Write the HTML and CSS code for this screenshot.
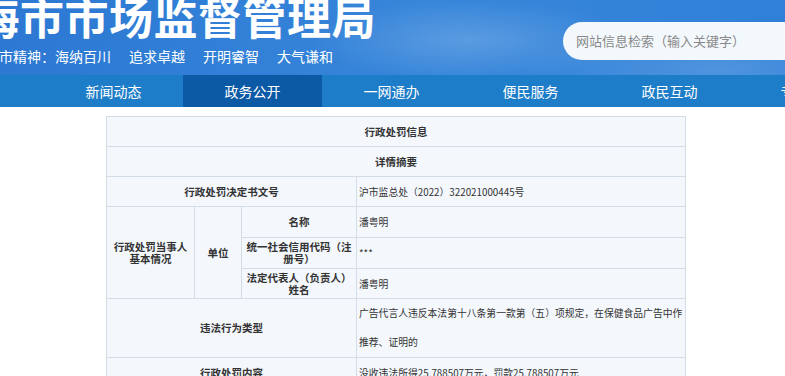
FILE: index.html
```html
<!DOCTYPE html>
<html lang="zh-CN">
<head>
    <meta charset="UTF-8">
    <meta name="viewport" content="width=device-width, initial-scale=1.0">
    <title>上海市市场监督管理局 - 行政处罚信息</title>
    <link rel="stylesheet" href="styles.css">
</head>
<body>
    <div class="header">
        <div class="brand">
            <div class="site-title">上海市市场监督管理局</div>
            <div class="motto">
                <span>上海市精神：海纳百川</span>
                <span>追求卓越</span>
                <span>开明睿智</span>
                <span>大气谦和</span>
            </div>
        </div>
        <div class="search-box">网站信息检索（输入关键字）</div>
    </div>

    <div class="nav">
        <div class="nav-inner">
            <a class="nav-item">新闻动态</a>
            <a class="nav-item active">政务公开</a>
            <a class="nav-item">一网通办</a>
            <a class="nav-item">便民服务</a>
            <a class="nav-item">政民互动</a>
            <a class="nav-item">专题专栏</a>
        </div>
    </div>

    <div class="content">
        <table class="info-table">
            <colgroup>
                <col class="c1">
                <col class="c2">
                <col class="c3">
                <col class="c4">
            </colgroup>
            <tr class="row-30">
                <td colspan="4" class="label">行政处罚信息</td>
            </tr>
            <tr class="row-30">
                <td colspan="4" class="label">详情摘要</td>
            </tr>
            <tr class="row-30">
                <td colspan="3" class="label">行政处罚决定书文号</td>
                <td class="value">沪市监总处（2022）322021000445号</td>
            </tr>
            <tr class="row-31">
                <td rowspan="3" class="label">行政处罚当事人<br>基本情况</td>
                <td rowspan="3" class="label">单位</td>
                <td class="label">名称</td>
                <td class="value">潘粤明</td>
            </tr>
            <tr class="row-31">
                <td class="label">统一社会信用代码（注册号）</td>
                <td class="value">***</td>
            </tr>
            <tr class="row-30">
                <td class="label">法定代表人（负责人）姓名</td>
                <td class="value">潘粤明</td>
            </tr>
            <tr class="row-57">
                <td colspan="3" class="label">违法行为类型</td>
                <td class="value long">广告代言人违反本法第十八条第一款第（五）项规定，在保健食品广告中作推荐、证明的</td>
            </tr>
            <tr class="row-30">
                <td colspan="3" class="label">行政处罚内容</td>
                <td class="value">没收违法所得25.788507万元，罚款25.788507万元</td>
            </tr>
        </table>
    </div>
</body>
</html>
```

FILE: styles.css
```css
body {
    margin: 0;
    font-family: "Noto Sans CJK SC", "Noto Sans", sans-serif;
    color: #333;
    background: #fff;
    overflow: hidden;
}

/* header */
.header {
    height: 75px;
    display: flex;
    justify-content: space-between;
    overflow: hidden;
    background:
        radial-gradient(ellipse 160px 40px at 470px 40px, rgba(255,255,255,0.18), rgba(255,255,255,0) 100%),
        radial-gradient(ellipse 200px 50px at 720px 70px, rgba(255,255,255,0.15), rgba(255,255,255,0) 100%),
        linear-gradient(to right, #2c78d3, #3786da 55%, #2f80d8);
}

.brand {
    margin-left: -69px;
    color: #fff;
}

.site-title {
    font-size: 44px;
    font-weight: bold;
    letter-spacing: 0.5px;
    line-height: 44px;
    margin-top: -6px;
    white-space: nowrap;
}

.motto {
    margin-top: 8px;
    margin-left: 40px;
    font-size: 14px;
    line-height: 20px;
    white-space: nowrap;
    display: flex;
    gap: 18px;
}

.search-box {
    margin-top: 22px;
    width: 300px;
    height: 38px;
    margin-right: -78px;
    border-radius: 19px;
    background: rgba(255,255,255,0.94);
    color: #888;
    font-size: 13px;
    line-height: 38px;
    padding-left: 13px;
    box-sizing: border-box;
    flex-shrink: 0;
    white-space: nowrap;
}

/* nav */
.nav {
    height: 32px;
    background: #1e7dc8;
    overflow: hidden;
}

.nav-inner {
    display: flex;
    padding-left: 44px;
    white-space: nowrap;
}

.nav-item {
    flex: 0 0 139px;
    height: 32px;
    line-height: 32px;
    text-align: center;
    color: #fff;
    font-size: 14px;
}

.nav-item.active {
    background: #0c5aa6;
}

/* table */
.content {
    padding-top: 9px;
    display: flex;
    justify-content: center;
    padding-left: 7px;
}

.info-table {
    border-collapse: collapse;
    table-layout: fixed;
    width: 579px;
    background: #f4f8fd;
}

.c1 { width: 88px; }
.c2 { width: 47px; }
.c3 { width: 115px; }
.c4 { width: 329px; }

.info-table td {
    border: 1px solid #d3dde8;
    padding: 0 2px;
    font-size: 10.5px;
    line-height: 12px;
}

.row-30 td { height: 29px; }
.row-31 td { height: 30px; }
.row-57 td { height: 56px; }

.label {
    text-align: center;
    font-weight: bold;
    color: #333;
}

.info-table td.value {
    text-align: left;
    font-size: 9.8px;
    color: #333;
}

.info-table td.long {
    line-height: 29px;
    padding-top: 0;
}
```
